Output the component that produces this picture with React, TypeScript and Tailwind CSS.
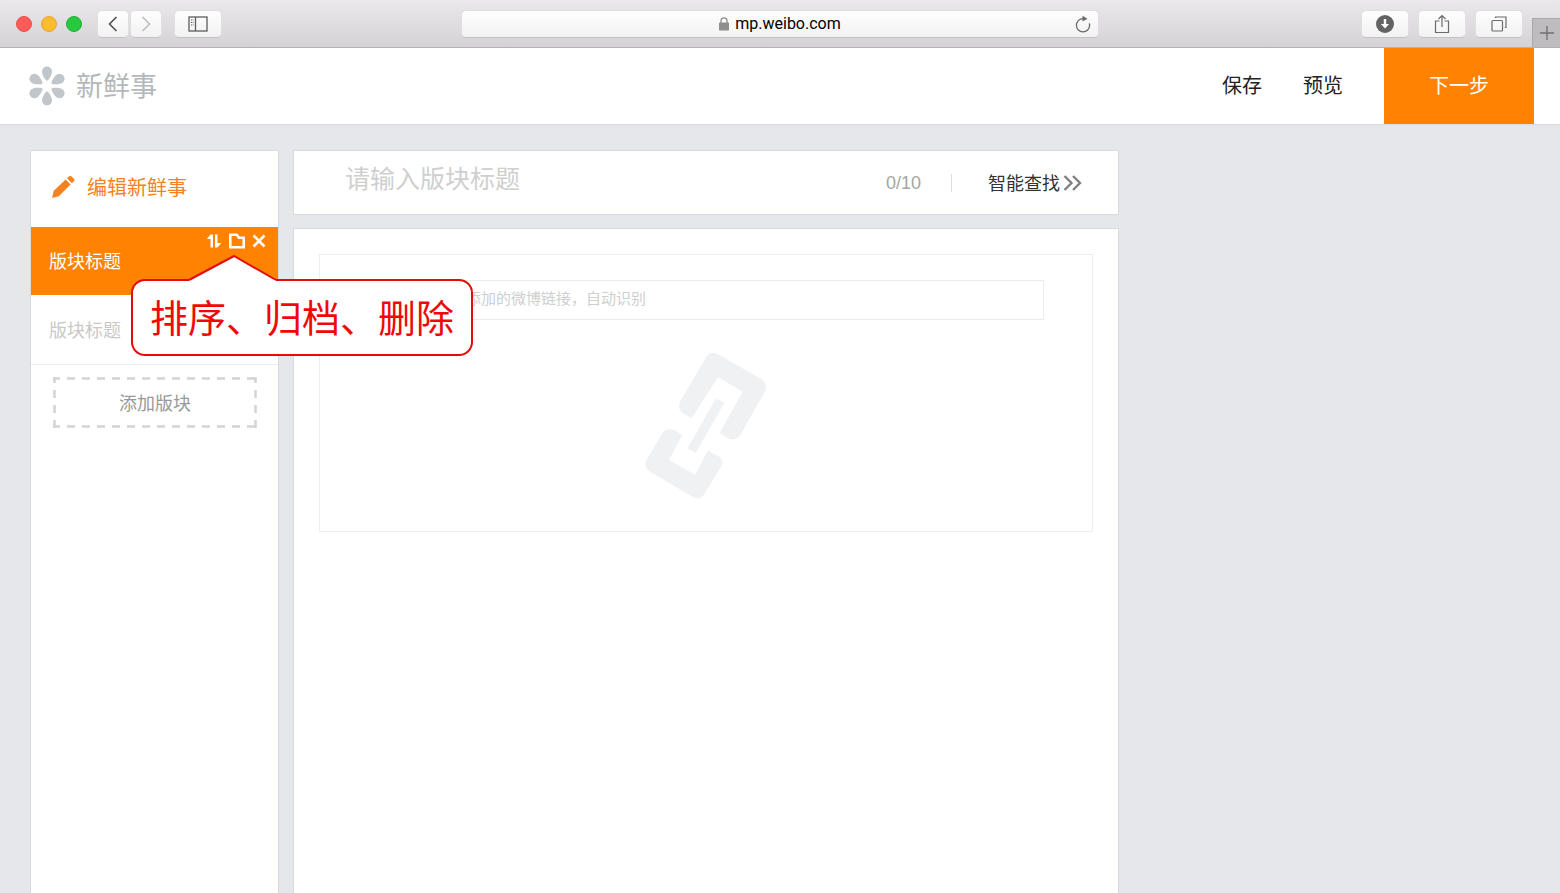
import React, { useState } from "react";
import clsx from "clsx";

const toolbarButton =
  "h-7 flex items-center justify-center rounded-[5px] bg-linear-to-b from-[#fefefe] to-[#f3f2f3] border border-[#e0dee0] border-b-[#c3c1c3] text-[#6b6b6b]";

function Toolbar() {
  return (
    <div className="h-12 shrink-0 flex items-center rounded-t-md bg-linear-to-b from-[#ebe9eb] to-[#d4d2d4] border-b border-[#b3b1b3]">
      <div className="flex-1 flex items-center">
        <div className="ml-4 flex items-center gap-[9px]">
          <span className="size-4 rounded-full bg-[#fc5b57] border border-[#e5504b]" />
          <span className="size-4 rounded-full bg-[#fdbc2f] border border-[#e2a52a]" />
          <span className="size-4 rounded-full bg-[#27c93f] border border-[#1fb034]" />
        </div>
        <div className="ml-[15px] flex gap-px">
          <button type="button" aria-label="后退" className={clsx(toolbarButton, "w-8")}>
            <svg width="10" height="16" viewBox="0 0 10 16" fill="none" stroke="#4f4f4f" strokeWidth="1.6">
              <path d="M8.5 1 1.5 8l7 7" />
            </svg>
          </button>
          <button type="button" aria-label="前进" className={clsx(toolbarButton, "w-8")}>
            <svg width="10" height="16" viewBox="0 0 10 16" fill="none" stroke="#bdbdbd" strokeWidth="1.6">
              <path d="m1.5 1 7 7-7 7" />
            </svg>
          </button>
        </div>
        <button type="button" aria-label="边栏" className={clsx(toolbarButton, "ml-3 w-12")}>
          <svg width="20" height="16" viewBox="0 0 20 16" fill="none" stroke="#5c5c5c" strokeWidth="1.3">
            <rect x="1" y="1" width="18" height="14" />
            <path d="M7.5 1v14" />
            <path d="M3 4h2.500M3 6.500h2.500M3 9h2.500" strokeWidth="1" strokeDasharray="1 0.6" />
          </svg>
        </button>
      </div>

      <div className="w-[638px] min-w-0 h-7 flex items-center rounded-[5px] bg-linear-to-b from-[#fefefe] to-[#f3f2f3] border border-[#e0dee0] border-b-[#c3c1c3] px-[7px]">
        <div className="flex-1 flex items-center justify-center gap-[6px] pl-4 text-black">
          <svg width="10" height="14" viewBox="0 0 10 14">
            <path d="M2 6V3.8a3 3 0 0 1 6 0V6" fill="none" stroke="#8e8e8e" strokeWidth="1.3" />
            <rect y="5.5" width="10" height="8" rx="0.8" fill="#8e8e8e" />
          </svg>
          <span className="font-[Roboto,sans-serif] text-base leading-5">mp.weibo.com</span>
        </div>
        <button type="button" aria-label="刷新">
          <svg width="16" height="18" viewBox="0 0 16 18" fill="none" stroke="#6b6b6b" strokeWidth="1.3">
            <path d="M8 3.7a6.600 6.600 0 1 0 6.600 6.600c0-.7-.1-1.300-.3-1.900" />
            <path d="m7.500.8 5 3-5 2.800z" fill="#6b6b6b" stroke="none" />
          </svg>
        </button>
      </div>

      <div className="flex-1 self-stretch flex items-center justify-end">
        <div className="flex gap-[9px] mr-[9px]">
          <button type="button" aria-label="下载" className={clsx(toolbarButton, "w-12")}>
            <svg width="18" height="18" viewBox="0 0 18 18">
              <circle cx="9" cy="9" r="9" fill="#636363" />
              <path d="M7.8 4h2.400v5h2.900L9 13.500 4.900 9h2.900z" fill="#fff" />
            </svg>
          </button>
          <button type="button" aria-label="共享" className={clsx(toolbarButton, "w-12")}>
            <svg width="16" height="20" viewBox="0 0 16 20" fill="none" stroke="#6b6b6b" strokeWidth="1.2">
              <path d="M5.5 7H1.500v11.500h13V7h-4" />
              <path d="M8 13V1.500M4.500 5 8 1.500 11.500 5" />
            </svg>
          </button>
          <button type="button" aria-label="标签页" className={clsx(toolbarButton, "w-12")}>
            <svg width="16" height="16" viewBox="0 0 16 16" fill="none" stroke="#6b6b6b" strokeWidth="1.2">
              <rect x="1" y="4.5" width="10.5" height="10.5" rx="1" />
              <path d="M4.500 2V1H15v10.500h-1.200" />
            </svg>
          </button>
        </div>
        <button
          type="button"
          aria-label="新标签页"
          className="self-end w-7 h-[29px] flex items-center justify-center bg-[#bebcbe] border-t border-l border-[#aaa8aa]"
        >
          <svg width="14" height="14" viewBox="0 0 14 14" stroke="#6f6f6f" strokeWidth="1.3">
            <path d="M7 0v14M0 7h14" />
          </svg>
        </button>
      </div>
    </div>
  );
}

function Logo() {
  return (
    <svg width="38" height="40" viewBox="-19 -20 38 40" fill="#c0c6c9">
      {[0, 60, 120, 180, 240, 300].map((angle) => (
        <path
          key={angle}
          d="M0-5.200C-1.300-5.200-5-11-5-14.500a5 5 0 0 1 10 0C5-11 1.300-5.200 0-5.200z"
          transform={`rotate(${angle})`}
        />
      ))}
    </svg>
  );
}

function Header() {
  return (
    <header className="h-[77px] shrink-0 flex items-center bg-white border-b border-[#d9dadd] pl-7 pr-[26px]">
      <a href="#" className="flex items-center gap-[10px] text-[27px] leading-9 text-[#b4b8ba]">
        <Logo />
        <span className="pb-[2px]">新鲜事</span>
      </a>
      <nav className="ml-auto self-stretch flex text-xl">
        <div className="flex items-center gap-[41px] mr-[41px] pb-[3px]">
          <button type="button" className="text-[#222]">保存</button>
          <button type="button" className="text-[#222]">预览</button>
        </div>
        <button type="button" className="w-[150px] bg-[#ff8200] pb-[3px] text-white">下一步</button>
      </nav>
    </header>
  );
}

// Burbuja con el borde rojo y la punta hacia los iconos
function Callout() {
  return (
    <div className="absolute z-10 top-[52px] left-[100px] rounded-[14px] border-2 border-[#e60b0b] bg-white px-[17px] pt-[7px] pb-[11px]">
      <svg className="absolute -top-[27px] left-14" width="88" height="29" viewBox="0 0 88 29">
        <path d="M0 29v-3L45 1l42 25v3z" fill="#fff" />
        <path d="M0 26 45 2l42 24" fill="none" stroke="#e60b0b" strokeWidth="2" />
      </svg>
      <p className="whitespace-nowrap text-[38px] leading-[55px] text-[#f00808]">排序、归档、删除</p>
    </div>
  );
}

function DashedFrame() {
  return (
    <svg className="absolute inset-0 size-full" stroke="#d4d4d4" strokeWidth="2.5" strokeDasharray="8 7">
      <line x1="0" y1="1.5" x2="100%" y2="1.5" strokeDashoffset="1" />
      <line x1="0" y1="49.5" x2="100%" y2="49.5" strokeDashoffset="1" />
      <line x1="1.5" y1="0" x2="1.5" y2="100%" strokeDashoffset="2" />
      <line x1="202.5" y1="0" x2="202.5" y2="100%" strokeDashoffset="2" />
    </svg>
  );
}

function Sidebar() {
  return (
    <aside className="w-[249px] shrink-0 bg-white border border-b-0 border-[#d9dadd]">
      <div className="h-[76px] flex items-center gap-3 pl-5 pb-1 text-xl text-[#f58220]">
        <svg width="24" height="24" viewBox="0 0 24 24" fill="currentColor">
          <path d="M1 23l1.800-7.300L14.600 4.600l5 5L7.800 21.200z" />
          <path d="M16 3.300l2.200-2.100a1.500 1.500 0 0 1 2.100 0l2.800 2.800a1.500 1.500 0 0 1 0 2.100L21 8.200z" />
        </svg>
        <span>编辑新鲜事</span>
      </div>
      <div className="relative h-[68px] flex items-start bg-[#ff8200] pl-[18px] pr-3 text-white">
        <button type="button" className="self-center pb-[2px] text-lg">版块标题</button>
        <div className="ml-auto mt-[6px] flex items-center gap-[7px]">
          <button type="button" aria-label="排序">
            <svg width="16" height="16" viewBox="0 0 16 16" fill="currentColor">
              <path d="M4.500 1.500H7v13H4.500V6H.8z" />
              <path d="M9 1.500h2.500V10h3.800L11.500 14.500H9z" />
            </svg>
          </button>
          <button type="button" aria-label="归档">
            <svg width="16" height="16" viewBox="0 0 16 16" fill="none" stroke="currentColor" strokeWidth="2.6">
              <path d="M1.300 1.800h6.500l2.200 3h4.700v9.400H1.300z" />
            </svg>
          </button>
          <button type="button" aria-label="删除">
            <svg width="14" height="14" viewBox="0 0 14 14" fill="none" stroke="currentColor" strokeWidth="2.6">
              <path d="M1.500 1.500l11 11M12.500 1.500l-11 11" />
            </svg>
          </button>
        </div>
        <Callout />
      </div>
      <div className="h-[70px] flex items-center pl-[18px] pb-[2px] border-b border-[#eceded]">
        <button type="button" className="text-lg text-[#c9c9c9]">版块标题</button>
      </div>
      <button
        type="button"
        className="relative mt-3 ml-[22px] w-[204px] h-[51px] pb-[2px] text-lg text-[#999]"
      >
        <DashedFrame />
        添加版块
      </button>
    </aside>
  );
}

function LinkDrawing() {
  return (
    <svg width="122" height="147" viewBox="78 64 366 441" fill="#f0f1f3">
      <path d="M218 263 192 248Q174 236 184 212L260 82Q272 60 296 70L426 145Q448 160 438 182L365 311Q354 332 330 324L302 307 371 183 297 140z" />
      <path d="M190 312 166 299Q144 290 130 308L84 386Q72 406 90 421L222 499Q242 510 256 490L306 408Q314 389 299 377L266 360 229 432 150 388z" />
      <path d="M291 203 316 216 230 367 205 354z" />
    </svg>
  );
}

function Editor() {
  const [title, setTitle] = useState("");
  const [link, setLink] = useState("");

  return (
    <main className="flex-1 min-w-0 max-w-[826px] flex flex-col gap-[13px]">
      <section className="h-[65px] shrink-0 flex items-center bg-white border border-[#d9dadd] pl-[51px] pr-9">
        <input
          type="text"
          aria-label="版块标题"
          placeholder="请输入版块标题"
          maxLength={10}
          value={title}
          onChange={(e) => setTitle(e.target.value)}
          className="flex-1 min-w-0 mb-3 text-[25px] leading-9 outline-none placeholder:text-[#cfcfcf]"
        />
        <span className="font-[Liberation_Sans,sans-serif] text-lg text-[#a5a5a5]">{title.length}/10</span>
        <span className="ml-[30px] h-[18px] border-l border-[#dcdcdc]" />
        <button type="button" className="ml-9 flex items-center gap-[3px] text-lg text-[#333]">
          <span className="pb-[2px]">智能查找</span>
          <svg width="19" height="16" viewBox="0 0 19 16" fill="none" stroke="#808080" strokeWidth="2.4">
            <path d="m1.500 1 7 7-7 7M10 1l7 7-7 7" />
          </svg>
        </button>
      </section>
      <section className="flex-1 bg-white border border-b-0 border-[#d9dadd] p-[25px]">
        <div className="h-[278px] border border-[#eeeeee] px-12 pt-[25px]">
          <input
            type="text"
            aria-label="微博链接"
            placeholder="请输入您要添加的微博链接，自动识别"
            value={link}
            onChange={(e) => setLink(e.target.value)}
            className="block w-full h-10 border border-[#ebebeb] pl-[22px] pr-4 pb-[6px] text-[15px] outline-none placeholder:text-[#cfcfcf]"
          />
          <div className="mt-8 flex justify-center">
            <LinkDrawing />
          </div>
        </div>
      </section>
    </main>
  );
}

export default function App() {
  return (
    <div className="min-h-screen flex flex-col bg-[#e6e7eb] font-['Noto_Sans_CJK_SC',sans-serif]">
      <Toolbar />
      <Header />
      <div className="flex-1 flex gap-[14px] pt-[25px] px-[30px]">
        <Sidebar />
        <Editor />
      </div>
    </div>
  );
}
